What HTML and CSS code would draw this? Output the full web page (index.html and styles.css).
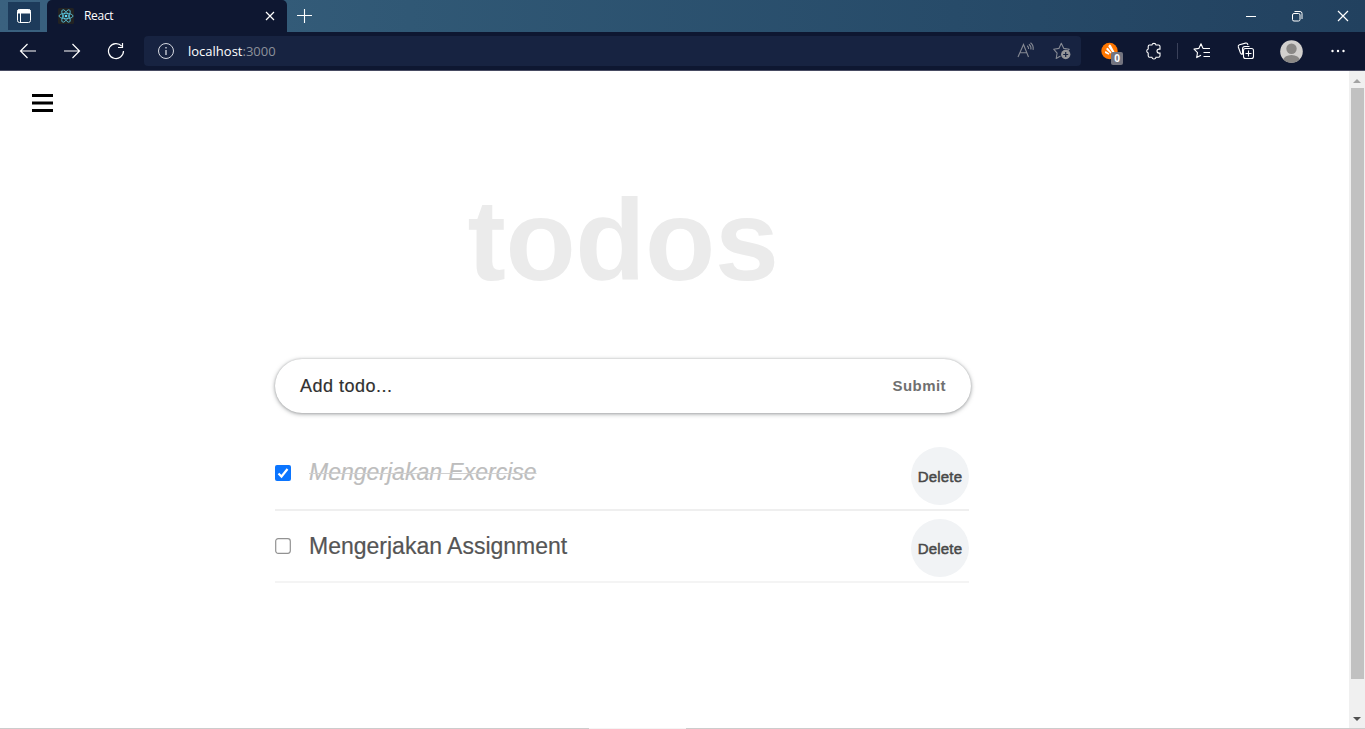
FILE: index.html
```html
<!DOCTYPE html>
<html lang="en">
<head>
<meta charset="utf-8">
<title>React</title>
<link rel="stylesheet" href="styles.css">
</head>
<body>
<div class="browser">
  <header class="tabstrip">
    <div class="workspace"><svg width="16" height="16" viewBox="0 0 16 16" fill="none" stroke="#fff"><rect x="1.5" y="1.5" width="13" height="13" rx="2"/><path d="M2 2h12v3H2z" fill="#fff"/><path d="M4.5 5v9.500"/></svg></div>
    <div class="tab">
      <svg class="favicon" width="16" height="16" viewBox="0 0 16 16"><rect width="16" height="16" rx="1.500" fill="#222"/><g fill="none" stroke="#5ccbe4" stroke-width=".8"><ellipse cx="8" cy="8" rx="7" ry="2.700"/><ellipse cx="8" cy="8" rx="7" ry="2.700" transform="rotate(60 8 8)"/><ellipse cx="8" cy="8" rx="7" ry="2.700" transform="rotate(120 8 8)"/></g><circle cx="8" cy="8" r="1.300" fill="#61dafb"/></svg>
      <span class="tab-title">React</span>
      <svg class="tab-close" width="10" height="10" viewBox="0 0 10 10" stroke="#fff" stroke-width="1.200"><path d="M1 1l8 8M9 1l-8 8"/></svg>
    </div>
    <div class="new-tab"><svg width="16" height="16" viewBox="0 0 16 16" stroke="#fff" stroke-width="1.100"><path d="M7.500 1v14M0 7.500h15"/></svg></div>
    <div class="window-controls">
      <span class="control"><svg width="12" height="12" viewBox="0 0 12 12" stroke="#fff"><path d="M1 6.500h10"/></svg></span>
      <span class="control"><svg width="12" height="12" viewBox="0 0 12 12" fill="none" stroke="#fff"><rect x="1.500" y="3.500" width="7.500" height="7.500" rx="1.500"/><path d="M3.500 1.500H9a2 2 0 0 1 2 2V9"/></svg></span>
      <span class="control"><svg width="12" height="12" viewBox="0 0 12 12" stroke="#fff" stroke-width="1.200"><path d="M1 1l10 10M11 1L1 11"/></svg></span>
    </div>
  </header>
  <nav class="toolbar">
    <span class="tool"><svg width="18" height="16" viewBox="0 0 18 16" fill="none" stroke="#fff" stroke-width="1.200"><path d="M17 8H1.500M8.500 1l-7 7 7 7"/></svg></span>
    <span class="tool"><svg width="18" height="16" viewBox="0 0 18 16" fill="none" stroke="#fff" stroke-width="1.200"><path d="M1 8h15.500M9.500 1l7 7-7 7"/></svg></span>
    <span class="tool"><svg width="18" height="18" viewBox="0 0 18 18" fill="none" stroke="#fff" stroke-width="1.200"><path d="M14.700 4.200A7.500 7.500 0 1 0 16.500 9M15.500 1v4.500H11"/></svg></span>
    <div class="address">
      <svg width="18" height="18" viewBox="0 0 18 18" fill="none" stroke="#d5d8e0"><circle cx="9" cy="9" r="7.500"/><path d="M9 8v5M9 5v1.500" stroke-width="1.300"/></svg>
      <span class="url">localhost<span class="port">:3000</span></span>
      <svg class="read-aloud" width="18" height="18" viewBox="0 0 18 18" fill="none" stroke="#858993" stroke-width="1.100"><path d="M1 15L6.500 2.500 11.500 15M3 10.800h7M10.200 3.700q1.600 1.200 1.400 3.300M11.900 2.200q2.500 1.900 2 5.300M13.500 .8q3.300 2.600 2.600 7"/></svg>
      <svg class="add-favorite" width="18" height="18" viewBox="0 0 18 18" fill="none" stroke="#858993" stroke-width="1.100"><path d="M7.500 14l-4.300 2.500.9-5.300L.7 7.200l5.200-.8L8.300 1.200l2.500 5.200 5.500.8-1.500 1.600" stroke-linejoin="round"/><circle cx="12.700" cy="12.500" r="4.700" fill="#95969a" stroke="none"/><path d="M12.700 10v5M10.200 12.500h5" stroke="#172341" stroke-width="1.200"/></svg>
    </div>
    <span class="tool extension"><svg width="18" height="18" viewBox="0 0 18 18"><circle cx="8.500" cy="9" r="8.200" fill="#f70"/><path d="M8 3q1-1 1.900.2L13.500 10l-2 .5L7.300 4.600zM5.600 6.300q.7-1 1.600-.1l3.300 4.200-1 1-4.200-4zM4 9.500q.8-.6 1.400-.1l3 2.200-.8 1.200L4 11z" fill="#fff"/></svg><b class="badge">0</b></span>
    <span class="tool"><svg width="18" height="18" viewBox="0 0 18 18" fill="none" stroke="#fff" stroke-width="1.100"><path d="M4.500 3h2.400a2.100 2.100 0 0 1 4.100 0h2.500q1.500 0 1.500 1.500v2.600h-1a2 2 0 0 0 0 4h1v2.700q0 1.500-1.500 1.500H11a2.100 2.100 0 0 1-4.100 0H4.500q-1.300 0-1.300-1.500v-2.700a2.100 2.100 0 0 1 0-4V4.500Q3.200 3 4.500 3z"/></svg></span>
    <i class="separator"></i>
    <span class="tool"><svg width="18" height="18" viewBox="0 0 18 18" fill="none" stroke="#fff" stroke-width="1.100" stroke-linejoin="round"><path d="M10 6.500L8 1.800 5.800 6.400 1 7.100l3.500 3.500-.8 5L8 13.300M10 6.500h7M10.500 10.500H17M10.500 14.500H17"/></svg></span>
    <span class="tool"><svg width="18" height="18" viewBox="0 0 18 18" fill="none" stroke="#fff" stroke-width="1.100"><path d="M5.500 12.500q-1.500-.3-2-1.500L1.300 5q-.4-1.600 1.200-2.200l6-1.700q1.500-.3 2.100 1L11 3M5.500 12.500V7q0-2.500 2.500-2.500h4.500"/><rect x="6.500" y="6.500" width="10" height="10" rx="2"/><path d="M11.500 8.500v6M8.500 11.500h6"/></svg></span>
    <span class="tool profile"><svg width="23" height="23" viewBox="0 0 23 23"><defs><clipPath id="avatar"><circle cx="11.500" cy="11.500" r="11.300"/></clipPath></defs><g clip-path="url(#avatar)"><rect width="23" height="23" fill="#d2d0ce"/><circle cx="11.500" cy="8.700" r="5.200" fill="#8a8886"/><ellipse cx="11.500" cy="20.500" rx="8.300" ry="5.500" fill="#8a8886"/></g></svg></span>
    <span class="tool"><svg width="14" height="4" viewBox="0 0 14 4" fill="#fff"><circle cx="1.500" cy="2" r="1.200"/><circle cx="7" cy="2" r="1.200"/><circle cx="12.500" cy="2" r="1.200"/></svg></span>
  </nav>
  <div class="viewport">
    <div class="page">
      <svg class="menu" width="21" height="18" viewBox="0 0 21 18"><path d="M0 0h21v3H0zM0 7.500h21v3H0zM0 15h21v3H0z"/></svg>
      <main class="todos">
        <h1 class="title">todos</h1>
        <form class="add-form">
          <span class="placeholder">Add todo...</span>
          <span class="submit">Submit</span>
        </form>
        <ul class="list">
          <li class="item">
            <svg class="check" width="16" height="16" viewBox="0 0 16 16"><rect width="16" height="16" rx="2" fill="#0b75ff"/><path d="M3.500 8.500l3 3 6-7.500" fill="none" stroke="#fff" stroke-width="2.200"/></svg>
            <span class="label done">Mengerjakan Exercise</span>
            <span class="delete">Delete</span>
          </li>
          <li class="item">
            <svg class="check" width="16" height="16" viewBox="0 0 16 16"><rect x=".7" y=".7" width="14.600" height="14.600" rx="2.500" fill="#fff" stroke="#929292" stroke-width="1.200"/></svg>
            <span class="label">Mengerjakan Assignment</span>
            <span class="delete">Delete</span>
          </li>
        </ul>
      </main>
    </div>
    <aside class="scrollbar">
      <svg width="8" height="4" viewBox="0 0 8 4"><path d="M0 4l4-4 4 4z" fill="#a3a3a3"/></svg>
      <i class="thumb"></i>
      <svg class="down" width="8" height="4" viewBox="0 0 8 4"><path d="M0 0h8L4 4z" fill="#505050"/></svg>
    </aside>
  </div>
  <footer class="edge"></footer>
</div>
</body>
</html>
```
FILE: styles.css
```css
* { box-sizing: border-box; }
body { margin: 0; font-family: "Liberation Sans", Arial, sans-serif; }
svg { display: block; flex: none; }
.browser { width: 1365px; height: 729px; display: flex; flex-direction: column; overflow: hidden; background: #fff; }
.tabstrip { height: 32px; flex: none; display: flex; padding-left: 8px; background: linear-gradient(90deg, #3a617f, #305875 30%, #274b69 70%, #22415f); }
.workspace { width: 32px; height: 28px; margin: 2px 7px 0 0; display: grid; place-items: center; background: #1d3b5b; }
.tab { width: 240px; display: flex; align-items: center; padding: 0 12px 0 11px; background: #0e1731; border-radius: 5px 5px 0 0; }
.tab-title { margin-left: 10px; padding-bottom: 2px; color: #fff; font: 12px "Open Sans", sans-serif; letter-spacing: -.3px; }
.tab-close { margin-left: auto; }
.new-tab { width: 35px; display: grid; place-items: center; }
.window-controls { display: flex; margin-left: auto; }
.control { width: 46px; display: grid; place-items: center; }
.control:last-child { width: 45px; }
.toolbar { height: 39px; flex: none; display: flex; align-items: center; padding-left: 6px; background: #0e1731; border-bottom: 1px solid #484b62; }
.tool { position: relative; width: 44px; height: 38px; flex: none; display: grid; place-items: center; }
.address { width: 937px; height: 30px; margin-left: 6px; display: flex; align-items: center; padding: 0 10px 0 13px; background: #172341; border-radius: 4px; }
.url { margin-left: 13px; color: #fff; font: 13px "Open Sans", sans-serif; }
.port { color: #8d919b; }
.read-aloud { margin-left: auto; }
.add-favorite { margin-left: 18px; }
.extension { margin-left: 7px; }
.extension svg, .extension + .tool svg { margin-right: 1px; }
.badge { position: absolute; left: 23px; top: 20px; width: 12px; height: 13px; border-radius: 2px; background: #73747f; color: #fff; font: bold 10px/13px "Open Sans", sans-serif; text-align: center; }
.separator { width: 1px; height: 16px; margin: 0 2px 0 1px; background: #3a415a; }
.profile { width: 48px; }
.profile svg { margin-right: 1px; }
.viewport { flex: 1; display: flex; min-height: 0; }
.page { flex: 1; background: #fff; padding: 23px 0 0 32px; }
.todos { width: 696px; margin-left: 243px; }
.title { margin: 62px 0 0; height: 133px; text-align: center; color: #ebebeb; font-size: 115px; line-height: 133px; letter-spacing: -.4px; }
.add-form { width: 696px; height: 54px; margin: 52px 0 0; padding: 0 25px; display: flex; align-items: center; justify-content: space-between; border-radius: 27px; box-shadow: 0 1px 4px rgba(60,64,67,.5), 0 0 2px rgba(60,64,67,.2); }
.placeholder { padding-top: 1px; color: #303030; font-size: 18px; letter-spacing: .5px; -webkit-text-stroke: .2px; }
.submit { color: #707070; font-size: 15px; font-weight: bold; letter-spacing: .45px; padding-bottom: 2px; }
.list { margin: 26px 0 0; padding: 0; list-style: none; }
.item { height: 72px; width: 694px; display: flex; align-items: center; border-bottom: 2px solid #f4f4f4; }
.item:first-child { border-bottom-color: #efefef; }
.item:first-child .check { margin-bottom: 3px; }
.label { margin-left: 18px; color: #555; font-size: 23px; -webkit-text-stroke: .2px; }
.done { padding-bottom: 4px; color: #bdbdbd; font-style: italic; text-decoration: line-through #d0d0d0; text-decoration-thickness: 1px; }
.delete { width: 58px; height: 58px; margin: 3px 0 0 auto; border-radius: 50%; background: #f1f3f5; color: #484848; font-size: 15px; line-height: 60px; text-align: center; -webkit-text-stroke: .5px; letter-spacing: .2px; }
.scrollbar { width: 16px; padding: 8px 0 7px; display: flex; flex-direction: column; align-items: center; background: #f0f0f0; }
.thumb { width: 13px; height: 591px; margin-top: 5px; background: #c1c1c1; }
.down { margin-top: auto; }
.edge { height: 1px; flex: none; background: linear-gradient(90deg, #ccc 589px, #f4f4f4 589px, #f4f4f4 686px, #ccc 686px); }
```
